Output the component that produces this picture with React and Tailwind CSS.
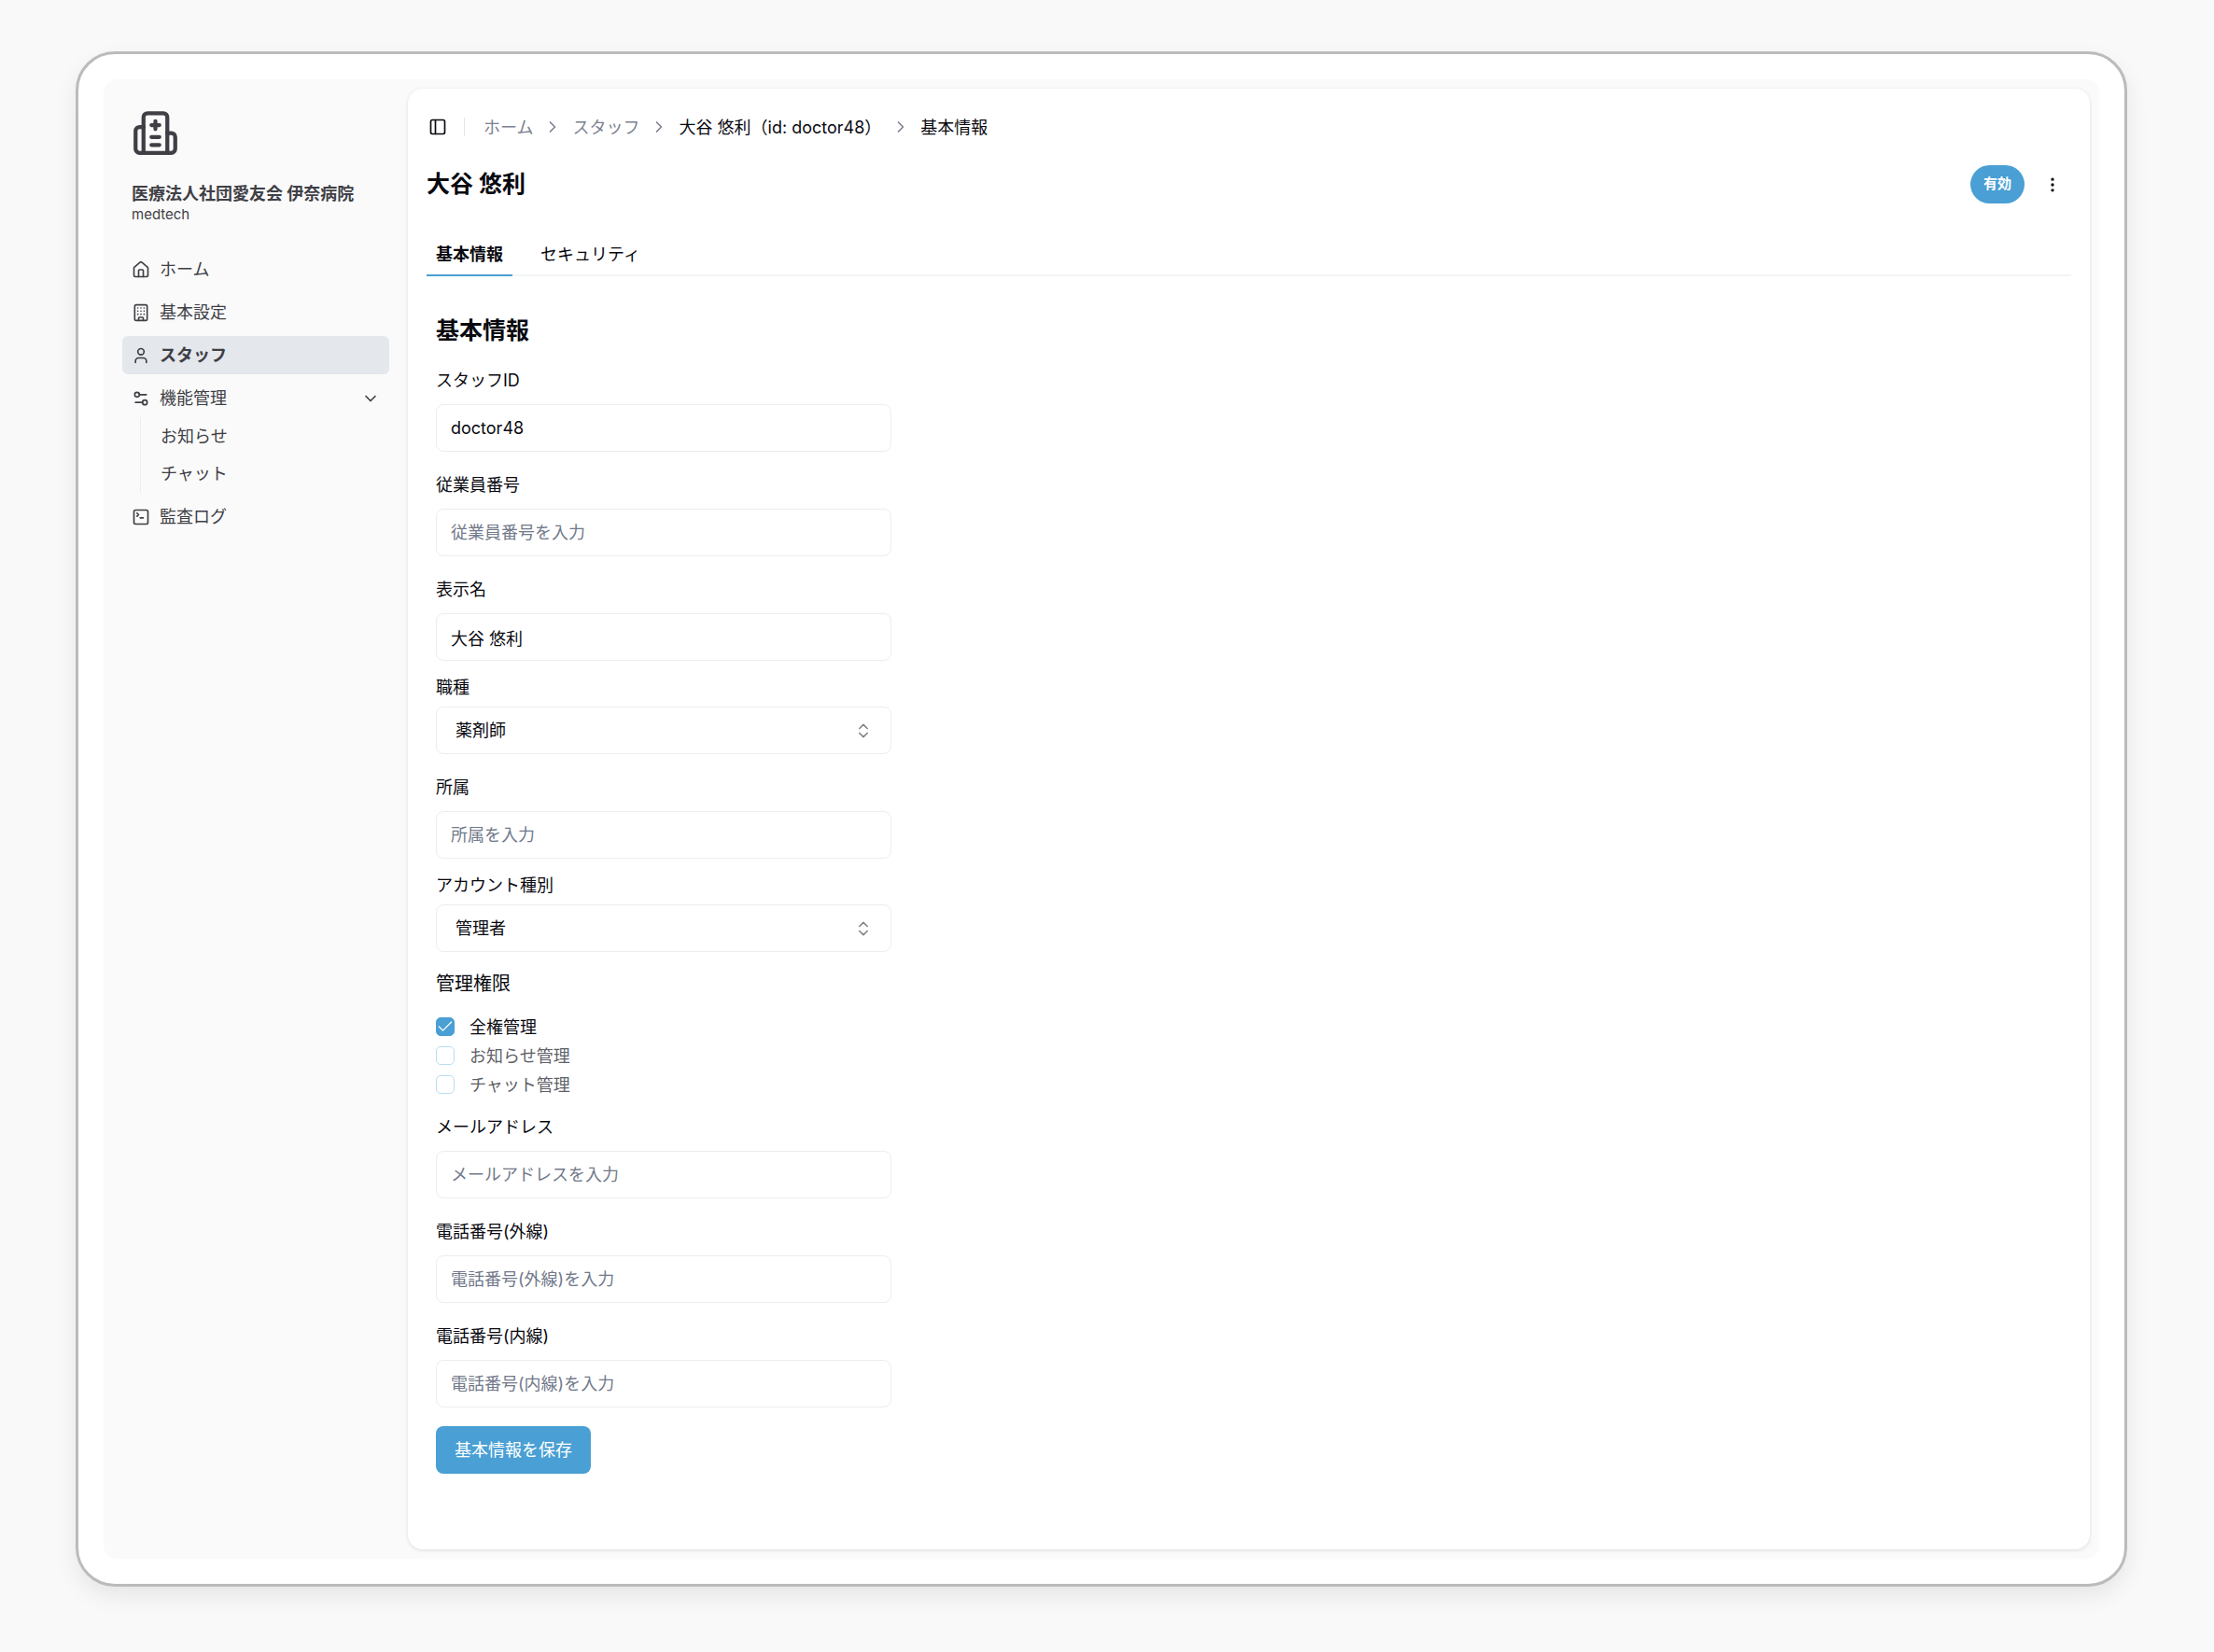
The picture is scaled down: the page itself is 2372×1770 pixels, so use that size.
import React, { useState } from 'react';
import {
  Building,
  Check,
  ChevronDown,
  ChevronRight,
  ChevronsUpDown,
  EllipsisVertical,
  House,
  PanelLeft,
  Settings2,
  SquareTerminal,
  User,
} from 'lucide-react';

const HospitalLogo = () => (
  <svg viewBox="0 0 24 24" fill="none" stroke="currentColor" strokeWidth="2" strokeLinecap="round" strokeLinejoin="round" className="size-[51px]">
    <path d="M6 22V4a2 2 0 0 1 2-2h8a2 2 0 0 1 2 2v18Z" />
    <path d="M6 9H4a2 2 0 0 0-2 2v9a2 2 0 0 0 2 2h2" />
    <path d="M18 12h2a2 2 0 0 1 2 2v6a2 2 0 0 1-2 2h-2" />
    <path d="M10 8h4M12 6v4M10 14h4M10 18h4" />
  </svg>
);

const navItems = [
  { label: 'ホーム', icon: House },
  { label: '基本設定', icon: Building },
  { label: 'スタッフ', icon: User, active: true },
];

const permissions = [
  { id: 'all', label: '全権管理' },
  { id: 'notice', label: 'お知らせ管理' },
  { id: 'chat', label: 'チャット管理' },
];

const NavLink = ({ icon: Icon, label, active }) => (
  <a
    href="#"
    className={`flex h-[41px] items-center gap-2.5 rounded-md px-2.5 ${
      active ? 'bg-[#e4e7ec] font-bold' : 'hover:bg-gray-100'
    }`}
  >
    <Icon className="size-5 shrink-0" />
    <span>{label}</span>
  </a>
);

const Sidebar = () => (
  <aside className="w-[326px] shrink-0 px-5 pt-[22px] text-[#3f3f46]">
    <div className="px-2.5">
      <HospitalLogo />
      <div className="mt-7 text-[18px] leading-6 font-bold whitespace-nowrap">医療法人社団愛友会 伊奈病院</div>
      <div className="text-[15px] leading-5">medtech</div>
    </div>
    <nav className="mt-7 flex flex-col gap-[5px]">
      {navItems.map((item) => (
        <NavLink key={item.label} {...item} />
      ))}
      <div>
        <button type="button" className="flex h-[41px] w-full items-center gap-2.5 rounded-md px-2.5">
          <Settings2 className="size-5 shrink-0" />
          <span>機能管理</span>
          <ChevronDown className="ml-auto size-5" />
        </button>
        <div className="ml-[19px] flex flex-col border-l border-[#ededf0] pl-[21px]">
          <a href="#" className="flex h-10 items-center">お知らせ</a>
          <a href="#" className="flex h-[41px] items-center">チャット</a>
        </div>
      </div>
      <NavLink icon={SquareTerminal} label="監査ログ" />
    </nav>
  </aside>
);

const TextField = ({ id, label, defaultValue, placeholder }) => (
  <div className="mt-[23px] flex flex-col gap-3">
    <label htmlFor={id} className="leading-[26px]">{label}</label>
    <input
      id={id}
      type="text"
      defaultValue={defaultValue}
      placeholder={placeholder}
      className="h-[51px] w-full rounded-lg border border-[#ededf0] bg-white px-[15px] placeholder:text-[#71798a]"
    />
  </div>
);

const SelectField = ({ id, label, options }) => (
  <div className="mt-4 flex flex-col gap-[7px]">
    <label htmlFor={id} className="leading-[26px]">{label}</label>
    <div className="relative">
      <select
        id={id}
        className="h-[51px] w-full appearance-none rounded-lg border border-[#ededf0] bg-white px-5"
      >
        {options.map((option) => (
          <option key={option}>{option}</option>
        ))}
      </select>
      <ChevronsUpDown className="pointer-events-none absolute top-4 right-5 size-5 text-[#84868c]" />
    </div>
  </div>
);

const Permissions = () => {
  const [checked, setChecked] = useState(['all']);
  const hasAll = checked.includes('all');

  const toggle = (id) => {
    setChecked((prev) => (prev.includes(id) ? prev.filter((p) => p !== id) : [...prev, id]));
  };

  return (
    <fieldset className="mt-[19px]">
      <legend className="text-[20px] leading-[30px]">管理権限</legend>
      <div className="mt-[21px] flex flex-col gap-[11px]">
        {permissions.map((permission) => {
          const isChecked = checked.includes(permission.id);
          // everything else is locked while full access is granted
          const disabled = hasAll && permission.id !== 'all';
          return (
            <label key={permission.id} className={`flex h-5 items-center gap-4 ${disabled ? 'text-[#5f6168]' : ''}`}>
              <span className="relative size-5">
                <input
                  type="checkbox"
                  checked={isChecked}
                  disabled={disabled}
                  onChange={() => toggle(permission.id)}
                  className="block size-5 appearance-none rounded-[5px] border border-[#b9ddf0] bg-white checked:border-[#4a9fd4] checked:bg-[#4a9fd4]"
                />
                {isChecked && <Check strokeWidth={1.5} className="pointer-events-none absolute inset-0 size-5 text-white" />}
              </span>
              {permission.label}
            </label>
          );
        })}
      </div>
    </fieldset>
  );
};

const Breadcrumb = () => (
  <nav className="flex h-[26px] items-center">
    <button type="button" aria-label="サイドバー" className="ml-0.5">
      <PanelLeft className="size-5" />
    </button>
    <span className="mr-5 ml-[18px] h-5 w-px bg-[#e4e4e9]" />
    <div className="flex items-center gap-[11px]">
      <a href="#" className="text-[#7b8190]">ホーム</a>
      <ChevronRight className="size-5 text-[#7b8190]" />
      <a href="#" className="text-[#7b8190]">スタッフ</a>
      <ChevronRight className="size-5 text-[#7b8190]" />
      <a href="#">大谷 悠利（id: doctor48）</a>
      <ChevronRight className="size-5 text-[#7b8190]" />
      <span>基本情報</span>
    </div>
  </nav>
);

const App = () => (
  <div className="min-h-screen bg-[#f9f9f9] px-[81px] pt-[55px] pb-[70px] font-['Inter','Noto_Sans_CJK_JP',sans-serif] text-[18px] text-[#09090f]">
    <div className="mr-3 rounded-[42px] border-[3px] border-[#bbbbbb] bg-white p-[27px] shadow-[0_10px_24px_rgba(0,0,0,0.08)]">
      <div className="flex rounded-[14px] bg-[#fafafa] py-2.5 pr-2.5">
        <Sidebar />
        <main className="min-h-[1565px] flex-1 rounded-2xl bg-white px-5 pt-7 shadow-[0_1px_4px_rgba(0,0,0,0.12)]">
          <Breadcrumb />
          <div className="mt-7 flex h-[41px] items-center">
            <h1 className="text-[25px] font-bold">大谷 悠利</h1>
            <span className="ml-auto flex h-[41px] items-center rounded-full bg-[#4a9fd4] px-3.5 text-[15px] font-bold text-white">有効</span>
            <button type="button" aria-label="メニュー" className="mr-2.5 ml-5">
              <EllipsisVertical className="size-5" />
            </button>
          </div>
          <div role="tablist" className="mt-7 flex h-[50px] border-b-2 border-[#f3f4f6]">
            <button role="tab" type="button" aria-selected="true" className="-mb-0.5 border-b-2 border-[#4a9fd4] px-2.5 pt-1 font-bold">基本情報</button>
            <button role="tab" type="button" aria-selected="false" className="ml-5 px-2.5 pt-1">セキュリティ</button>
          </div>
          <form className="mt-10 ml-2.5 w-[488px]" onSubmit={(e) => e.preventDefault()}>
            <h2 className="text-[25px] leading-9 font-bold">基本情報</h2>
            <TextField id="staffId" label="スタッフID" defaultValue="doctor48" />
            <TextField id="employeeNo" label="従業員番号" placeholder="従業員番号を入力" />
            <TextField id="displayName" label="表示名" defaultValue="大谷 悠利" />
            <SelectField id="jobType" label="職種" options={['薬剤師', '医師', '看護師']} />
            <TextField id="department" label="所属" placeholder="所属を入力" />
            <SelectField id="accountType" label="アカウント種別" options={['管理者', '一般']} />
            <Permissions />
            <TextField id="email" label="メールアドレス" placeholder="メールアドレスを入力" />
            <TextField id="telOutside" label="電話番号(外線)" placeholder="電話番号(外線)を入力" />
            <TextField id="telInside" label="電話番号(内線)" placeholder="電話番号(内線)を入力" />
            <button type="submit" className="mt-5 h-[51px] rounded-lg bg-[#4a9fd4] px-5 text-white">基本情報を保存</button>
          </form>
        </main>
      </div>
    </div>
  </div>
);

export default App;
